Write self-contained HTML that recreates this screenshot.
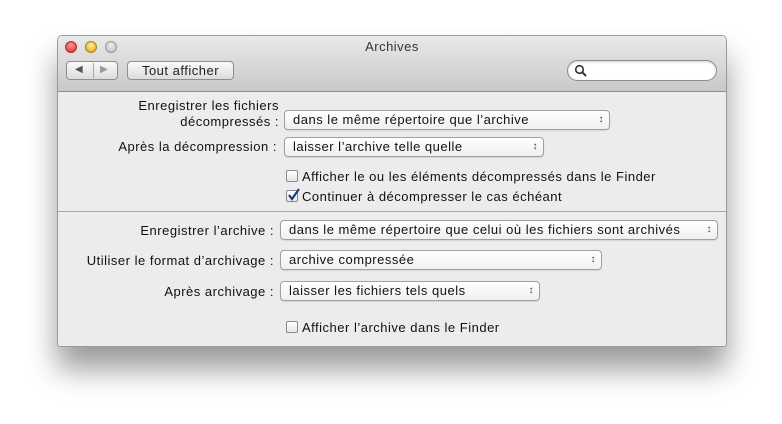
<!DOCTYPE html><html><head><style>
body{margin:0;width:782px;height:424px;background:#fff;position:relative;overflow:hidden;font-family:"Liberation Sans",sans-serif;font-size:13px;letter-spacing:0.5px;color:#111}
.win{position:absolute;left:57px;top:35px;width:668px;height:310px;background:#ececec;border:1px solid #9a9a9a;border-radius:5px 5px 3px 3px;box-shadow:0 22px 30px rgba(0,0,0,.4);overflow:hidden}
.tb{position:absolute;left:0;top:0;width:668px;height:55px;background:linear-gradient(#e9e9e9,#c9c9c9);border-bottom:1px solid #8c8c8c}
.a{position:absolute;white-space:nowrap}
.dot{position:absolute;top:5px;width:12px;height:12px;border-radius:50%}
.btn{position:absolute;height:19px;border:1px solid #8e8e8e;border-radius:4px;background:linear-gradient(#fafafa,#dcdcdc);box-sizing:border-box}
.pop{position:absolute;height:20px;border:1px solid #a0a0a0;border-radius:4px;background:linear-gradient(#fff,#f0f0f0);box-sizing:border-box;padding-left:8px;line-height:18px;box-shadow:0 1px 1px rgba(0,0,0,.1);white-space:nowrap}
.pop::after{content:"\2195";position:absolute;right:5px;top:0;font-size:10px;color:#444}
.lbl{position:absolute;text-align:right;right:0;white-space:nowrap}
.cb{position:absolute;width:12px;height:12px;border:1px solid #8a8a8a;border-radius:2px;background:linear-gradient(#fff,#e6e6e6);box-sizing:border-box}
</style></head><body>
<div class="win">
<div class="tb">
<div class="dot" style="left:7px;background:radial-gradient(circle at 50% 35%,#f99,#d22);border:1px solid #a33;box-sizing:border-box"></div>
<div class="dot" style="left:27px;background:radial-gradient(circle at 50% 35%,#fe9,#d9a012);border:1px solid #a7831a;box-sizing:border-box"></div>
<div class="dot" style="left:47px;background:radial-gradient(circle at 50% 35%,#eee,#b8b8b8);border:1px solid #999;box-sizing:border-box"></div>
<div class="a" style="left:0;width:668px;top:3px;text-align:center;color:#333">Archives</div>
<div class="btn" style="left:8px;top:25px;width:52px"><span class="a" style="left:8px;top:2px;font-size:10px;color:#555">◀</span><span class="a" style="left:26px;top:1px;width:1px;height:15px;background:#aaa"></span><span class="a" style="left:33px;top:2px;font-size:10px;color:#999">▶</span></div>
<div class="btn" style="left:69px;top:25px;width:107px;text-align:center;line-height:17px;color:#222">Tout afficher</div>
<div class="a" style="left:509px;top:24px;width:150px;height:21px;border:1px solid #8e8e8e;border-radius:11px;background:#fff;box-sizing:border-box;box-shadow:inset 0 1px 2px rgba(0,0,0,.2)">
<svg width="14" height="14" style="position:absolute;left:6px;top:3px"><circle cx="5.5" cy="5.5" r="3.8" fill="none" stroke="#333" stroke-width="1.6"/><path d="M8.3 8.3L12 12" stroke="#333" stroke-width="2"/></svg></div>
</div>
<div class="a" style="left:0;top:58px;width:221px;height:40px"><div class="lbl" style="top:4px">Enregistrer les fichiers</div><div class="lbl" style="top:20px">décompressés :</div></div>
<div class="pop" style="left:226px;top:74px;width:326px">dans le même répertoire que l’archive</div>
<div class="a" style="left:0;top:103px;width:219px"><div class="lbl">Après la décompression :</div></div>
<div class="pop" style="left:226px;top:101px;width:260px">laisser l’archive telle quelle</div>
<div class="cb" style="left:228px;top:134px"></div><div class="a" style="left:244px;top:133px">Afficher le ou les éléments décompressés dans le Finder</div>
<div class="cb" style="left:228px;top:154px"><svg width="14" height="14" style="position:absolute;left:0;top:-3px"><path d="M2 7L5 11L12 1" fill="none" stroke="#1a3f8a" stroke-width="2.2"/></svg></div><div class="a" style="left:244px;top:153px">Continuer à décompresser le cas échéant</div>
<div class="a" style="left:0;top:175px;width:668px;height:1px;background:#a8a8a8"></div>
<div class="a" style="left:0;top:187px;width:216px"><div class="lbl">Enregistrer l’archive :</div></div>
<div class="pop" style="left:222px;top:184px;width:438px">dans le même répertoire que celui où les fichiers sont archivés</div>
<div class="a" style="left:0;top:217px;width:216px"><div class="lbl">Utiliser le format d’archivage :</div></div>
<div class="pop" style="left:222px;top:214px;width:322px">archive compressée</div>
<div class="a" style="left:0;top:248px;width:216px"><div class="lbl">Après archivage :</div></div>
<div class="pop" style="left:222px;top:245px;width:260px">laisser les fichiers tels quels</div>
<div class="cb" style="left:228px;top:285px"></div><div class="a" style="left:244px;top:284px">Afficher l’archive dans le Finder</div>
</div>
</body></html>
